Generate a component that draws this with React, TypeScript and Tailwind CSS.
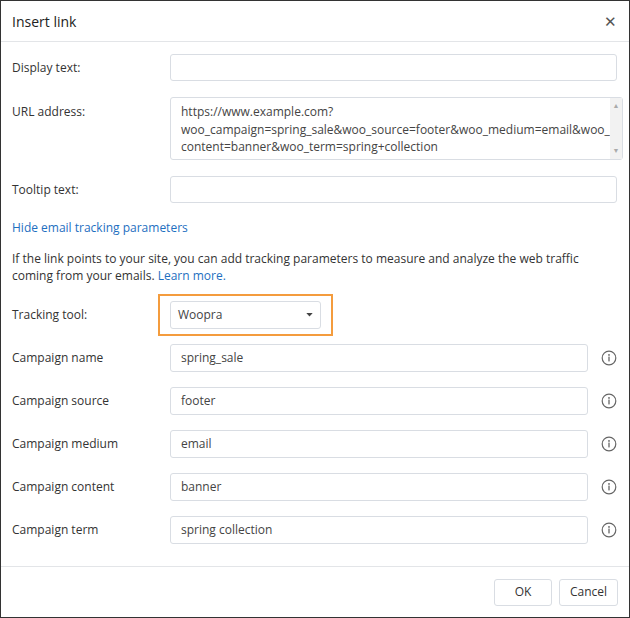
import React from "react";

const Info = () => (
  <svg width="16" height="16" viewBox="0 0 16 16" className="shrink-0">
    <circle cx="8" cy="8" r="6.8" fill="none" stroke="#666" strokeWidth="1.2" />
    <circle cx="8" cy="4.9" r="0.9" fill="#666" />
    <rect x="7.35" y="6.6" width="1.3" height="4.8" fill="#666" />
  </svg>
);

const Camp = ({ label, value }: { label: string; value: string }) => (
  <div className="flex items-center h-[28px]">
    <div className="w-[158px] shrink-0">{label}</div>
    <div className="w-[423px] h-[28px] border border-[#d9dde3] rounded-[3px] px-[10px] flex items-center text-[#444]">{value}</div>
    <div className="ml-[13px]"><Info /></div>
  </div>
);

export default function App() {
  return (
    <div className="w-[630px] h-[618px] bg-white border border-[#333] flex flex-col text-[12px] text-[#333]" style={{ fontFamily: '"Open Sans", sans-serif' }}>
      <div className="h-[41px] border-b border-[#e3e5e8] flex items-center justify-between pl-[11px] pr-[12px] shrink-0">
        <div className="text-[14px] text-[#222]">Insert link</div>
        <div className="text-[15px] text-[#555] leading-none">✕</div>
      </div>
      <div className="flex-1 pl-[11px] pr-[12px]">
        <div className="flex items-center mt-[12px]">
          <div className="w-[158px] shrink-0">Display text:</div>
          <div className="flex-1 h-[27px] border border-[#d9dde3] rounded-[3px]" />
        </div>
        <div className="flex mt-[16px]">
          <div className="w-[158px] shrink-0 pt-[6px]">URL address:</div>
          <div className="flex-1 h-[63px] border border-[#d9dde3] rounded-[3px] flex">
            <div className="flex-1 pl-[10px] pt-[5px] leading-[17.5px] text-[#444] whitespace-nowrap overflow-hidden">
              https://www.example.com?<br />woo_campaign=spring_sale&amp;woo_source=footer&amp;woo_medium=email&amp;woo_<br />content=banner&amp;woo_term=spring+collection
            </div>
            <div className="w-[12px] bg-[#f2f2f2] flex flex-col justify-between items-center py-[3px] text-[7px] text-[#aaa]"><span>▲</span><span>▼</span></div>
          </div>
        </div>
        <div className="flex items-center mt-[16px]">
          <div className="w-[158px] shrink-0">Tooltip text:</div>
          <div className="flex-1 h-[27px] border border-[#d9dde3] rounded-[3px]" />
        </div>
        <div className="mt-[16px] text-[#1e6fbf]">Hide email tracking parameters</div>
        <div className="mt-[13px] leading-[17px]">
          If the link points to your site, you can add tracking parameters to measure and analyze the web traffic coming from your emails. <span className="text-[#1e6fbf]">Learn more.</span>
        </div>
        <div className="flex items-center mt-[10px]">
          <div className="w-[146px] shrink-0">Tracking tool:</div>
          <div className="border-2 border-[#f49c3d] px-[10px] py-[5px]">
            <div className="w-[151px] h-[28px] border border-[#d9dde3] rounded-[3px] px-[7px] flex items-center justify-between text-[#444]">
              <span>Woopra</span>
              <svg width="7" height="4" viewBox="0 0 8 5"><path d="M0 0h8L4 4.5z" fill="#444" /></svg>
            </div>
          </div>
        </div>
        <div className="flex flex-col gap-[15px] mt-[8px]">
          <Camp label="Campaign name" value="spring_sale" />
          <Camp label="Campaign source" value="footer" />
          <Camp label="Campaign medium" value="email" />
          <Camp label="Campaign content" value="banner" />
          <Camp label="Campaign term" value="spring collection" />
        </div>
      </div>
      <div className="h-[51px] border-t border-[#e3e5e8] flex items-center justify-end gap-[7px] pr-[11px] shrink-0">
        <div className="w-[58px] h-[27px] border border-[#d9dde3] rounded-[3px] flex items-center justify-center">OK</div>
        <div className="w-[59px] h-[27px] border border-[#d9dde3] rounded-[3px] flex items-center justify-center">Cancel</div>
      </div>
    </div>
  );
}
